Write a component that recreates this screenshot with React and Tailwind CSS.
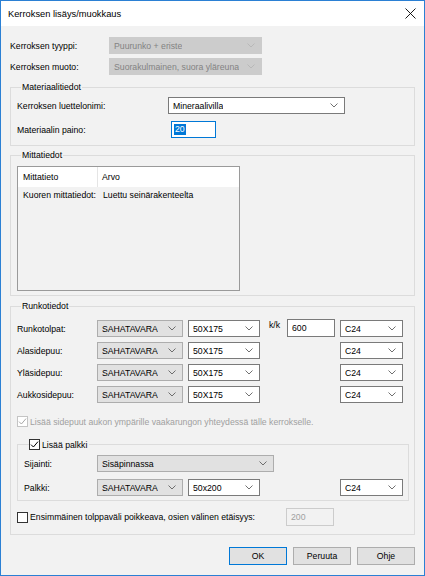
import React from "react";

const Chevron = ({ color }) => (
  <svg width="8" height="5" viewBox="0 0 8 5" className="shrink-0">
    <path d="M0.5 0.5 L4 4 L7.5 0.5" fill="none" stroke={color} strokeWidth="0.9" />
  </svg>
);

const comboStyles = {
  disabled: "bg-[#cccccc] border-[#cccccc] text-[#838383]",
  gray: "bg-[#e1e1e1] border-[#adadad] text-black",
  white: "bg-white border-[#7a7a7a] text-black",
};

const chevronColors = {
  disabled: "#b5b5b5",
  gray: "#606060",
  white: "#606060",
};

const Combo = ({ width, value, variant = "white" }) => (
  <div
    className={`${width} h-[17px] shrink-0 border flex items-center justify-between pl-[4px] pr-[6px] ${comboStyles[variant]}`}
  >
    <span className="truncate">{value}</span>
    <Chevron color={chevronColors[variant]} />
  </div>
);

const Checkbox = ({ checked, disabled }) => (
  <div
    className={`w-[11px] h-[11px] shrink-0 border bg-white flex items-center justify-center ${
      disabled ? "border-[#c4c4c4]" : "border-[#333333]"
    }`}
  >
    {checked && (
      <svg width="9" height="9" viewBox="0 0 9 9">
        <path
          d="M1 4.6 L3.4 7 L8 1.6"
          fill="none"
          stroke={disabled ? "#a8a8a8" : "#000000"}
          strokeWidth="1"
        />
      </svg>
    )}
  </div>
);

const Button = ({ label, primary }) => (
  <button
    className={`w-[58px] h-[18px] bg-[#e1e1e1] border text-black ${
      primary ? "border-[#0078d7]" : "border-[#adadad]"
    }`}
  >
    {label}
  </button>
);

const FrameRow = ({ label, grade = "SAHATAVARA", size = "50X175", kk }) => (
  <div className="flex items-center h-[17px]">
    <div className="w-[80px] shrink-0">{label}</div>
    <Combo width="w-[86px]" value={grade} variant="gray" />
    <div className="w-[5px] shrink-0" />
    <Combo width="w-[72px]" value={size} />
    {kk ? (
      <div className="flex items-start h-[17px] shrink-0">
        <span className="w-[27px] pl-[9px] -mt-[2px] leading-[14px]">k/k</span>
        <div className="w-[48px] h-[18px] bg-white border border-[#7a7a7a] pl-[4px] flex items-center -mt-[1px]">
          {kk}
        </div>
        <div className="w-[5px]" />
      </div>
    ) : (
      <div className="w-[80px] shrink-0" />
    )}
    <Combo width="w-[63px]" value="C24" />
  </div>
);

export default function App() {
  return (
    <div className="w-[425px] h-[576px] border border-[#2b80d4] bg-[#f2f2f2] flex flex-col text-[8.7px] leading-[12px] text-black font-['Liberation_Sans',Arial,sans-serif] overflow-hidden">
      <div className="h-[25px] bg-white flex items-center justify-between pl-[7px] pr-[8px] shrink-0">
        <span className="text-[9.3px]">Kerroksen lisäys/muokkaus</span>
        <svg width="11" height="11" viewBox="0 0 11 11">
          <path d="M0.5 0.5 L10.5 10.5 M10.5 0.5 L0.5 10.5" stroke="#000" strokeWidth="0.9" />
        </svg>
      </div>

      <div className="flex flex-col px-[9px]">
        <div className="flex items-center mt-[11px] h-[17px]">
          <div className="w-[99px] shrink-0">Kerroksen tyyppi:</div>
          <Combo width="w-[153px]" value="Puurunko + eriste" variant="disabled" />
        </div>
        <div className="flex items-center mt-[4px] h-[17px]">
          <div className="w-[99px] shrink-0">Kerroksen muoto:</div>
          <Combo width="w-[153px]" value="Suorakulmainen, suora yläreuna" variant="disabled" />
        </div>

        <fieldset className="mt-[6px] border border-[#dcdcdc] pl-[6px] pt-[4px] pb-[7px]">
          <legend className="ml-[4px] px-[1px]">Materiaalitiedot</legend>
          <div className="flex items-center h-[17px]">
            <div className="w-[151px] shrink-0">Kerroksen luettelonimi:</div>
            <Combo width="w-[177px]" value="Mineraalivilla" />
          </div>
          <div className="flex items-center h-[17px] mt-[7px]">
            <div className="w-[154px] shrink-0">Materiaalin paino:</div>
            <div className="w-[45px] h-[17px] bg-white border border-[#0078d7] flex items-center pl-[2px]">
              <span className="bg-[#0078d7] text-white px-[1px] leading-[11px]">20</span>
            </div>
          </div>
        </fieldset>

        <fieldset className="mt-[3px] border border-[#dcdcdc] pl-[6px] pt-[5px] pb-[4px]">
          <legend className="ml-[4px] px-[1px]">Mittatiedot</legend>
          <div className="w-[223px] h-[125px] border border-[#9a9a9a] bg-[#f2f2f2] flex flex-col">
            <div className="h-[20px] bg-white flex items-stretch shrink-0">
              <div className="w-[80px] border-r border-[#e5e5e5] pl-[5px] flex items-center">Mittatieto</div>
              <div className="pl-[4px] flex items-center">Arvo</div>
            </div>
            <div className="h-[16px] flex items-center">
              <div className="w-[81px] pl-[5px] whitespace-nowrap">Kuoren mittatiedot:</div>
              <div className="pl-[4px]">Luettu seinärakenteelta</div>
            </div>
          </div>
        </fieldset>

        <fieldset className="mt-[4px] border border-[#dcdcdc] pl-[6px] pt-[8px] pb-[8px]">
          <legend className="ml-[4px] px-[1px]">Runkotiedot</legend>
          <div className="flex flex-col gap-[5px]">
            <FrameRow label="Runkotolpat:" kk="600" />
            <FrameRow label="Alasidepuu:" />
            <FrameRow label="Yläsidepuu:" />
            <FrameRow label="Aukkosidepuu:" />
          </div>

          <div className="flex items-center gap-[2px] mt-[12px] h-[13px] text-[#a0a0a0]">
            <Checkbox checked disabled />
            <span>Lisää sidepuut aukon ympärille vaakarungon yhteydessä tälle kerrokselle.</span>
          </div>

          <fieldset className="mt-[10px] w-[392px] border border-[#dcdcdc] pl-[6px] pt-[4px] pb-[4px]">
            <legend className="ml-[5px] pr-[2px] flex items-center gap-[2px] h-[13px]">
              <Checkbox checked />
              <span>Lisää palkki</span>
            </legend>
            <div className="flex items-center h-[17px]">
              <div className="w-[73px] shrink-0">Sijainti:</div>
              <Combo width="w-[177px]" value="Sisäpinnassa" variant="gray" />
            </div>
            <div className="flex items-center h-[17px] mt-[7px]">
              <div className="w-[73px] shrink-0">Palkki:</div>
              <Combo width="w-[86px]" value="SAHATAVARA" variant="gray" />
              <div className="w-[5px] shrink-0" />
              <Combo width="w-[72px]" value="50x200" />
              <div className="w-[80px] shrink-0" />
              <Combo width="w-[63px]" value="C24" />
            </div>
          </fieldset>

          <div className="flex items-center h-[18px] mt-[7px]">
            <div className="w-[269px] flex items-center gap-[2px] shrink-0">
              <Checkbox />
              <span className="whitespace-nowrap">Ensimmäinen tolppaväli poikkeava, osien välinen etäisyys:</span>
            </div>
            <div className="w-[48px] h-[18px] border border-[#cccccc] bg-[#f2f2f2] text-[#a0a0a0] pl-[4px] flex items-center">
              200
            </div>
          </div>
        </fieldset>

        <div className="flex justify-end gap-[6px] mt-[12px]">
          <Button label="OK" primary />
          <Button label="Peruuta" />
          <Button label="Ohje" />
        </div>
      </div>
    </div>
  );
}
